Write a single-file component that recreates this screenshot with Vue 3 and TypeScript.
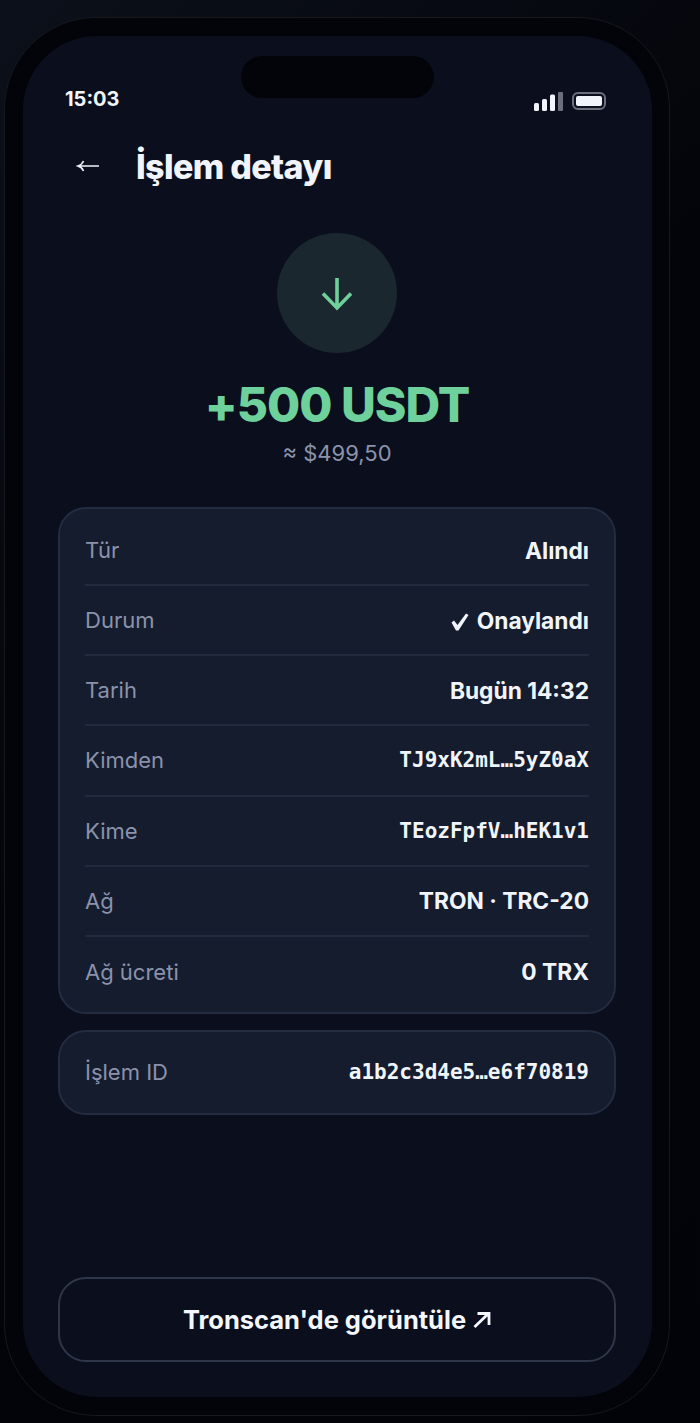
<script setup lang="ts">
interface Row {
  label: string;
  value: string;
  mono?: boolean;
  check?: boolean;
}

const rows: Row[] = [
  { label: 'Tür', value: 'Alındı' },
  { label: 'Durum', value: 'Onaylandı', check: true },
  { label: 'Tarih', value: 'Bugün 14:32' },
  { label: 'Kimden', value: 'TJ9xK2mL…5yZ0aX', mono: true },
  { label: 'Kime', value: 'TEozFpfV…hEK1v1', mono: true },
  { label: 'Ağ', value: 'TRON · TRC-20' },
  { label: 'Ağ ücreti', value: '0 TRX' },
];
</script>

<template>
  <div class="page">
    <div class="phone">
      <div class="screen">
        <div class="island"></div>

        <div class="status">
          <span class="time">15:03</span>
          <div class="status-icons">
            <svg width="30" height="20" viewBox="0 0 30 20" fill="none">
              <rect x="0" y="12" width="5" height="8" rx="1.500" fill="#f1f5fb" />
              <rect x="8" y="8" width="5" height="12" rx="1.500" fill="#f1f5fb" />
              <rect x="16" y="3.500" width="5" height="16.500" rx="1.500" fill="#f1f5fb" />
              <rect x="24" y="1" width="5" height="19" rx="1" fill="#6b6f7c" />
            </svg>
            <div class="battery"><div class="battery-fill"></div></div>
          </div>
        </div>

        <header class="header">
          <svg class="back" width="24" height="14" viewBox="0 0 24 14" fill="none">
            <path
              d="M3 7h20M7.500 2C6.500 4.500 5 6 2 7 5 8 6.500 9.500 7.500 12"
              stroke="#f1f5fb"
              stroke-width="1.600"
            />
          </svg>
          <h1 class="title">İşlem detayı</h1>
        </header>

        <section class="hero">
          <div class="hero-icon">
            <svg width="36" height="36" viewBox="0 0 36 36" fill="none">
              <path
                d="M18 3v30M4 18.500 18 33l14-14.500"
                stroke="#6ed19c"
                stroke-width="3.600"
              />
            </svg>
          </div>
          <div class="amount">+500 USDT</div>
          <div class="fiat">≈ $499,50</div>
        </section>

        <section class="card details">
          <div v-for="row in rows" :key="row.label" class="row">
            <span class="label">{{ row.label }}</span>
            <span class="value" :class="{ mono: row.mono }">
              <svg v-if="row.check" class="check" width="18" height="18" viewBox="0 0 18 18">
                <path d="M0.500 9.500 3 7.500 6.500 12 15 0.500 17.500 2 7.500 17.500H5Z" fill="#f1f5fb" />
              </svg>
              {{ row.value }}
            </span>
          </div>
        </section>

        <section class="card tx">
          <span class="label">İşlem ID</span>
          <span class="value mono">a1b2c3d4e5…e6f70819</span>
        </section>

        <button class="action" type="button">
          Tronscan'de görüntüle
          <svg width="18" height="16" viewBox="0 0 18 16" fill="none">
            <path d="M1.500 15 15 2M4.500 1.500H16V13" stroke="#f4f7fd" stroke-width="2.800" />
          </svg>
        </button>
      </div>
    </div>
  </div>
</template>

<style>
html,
body {
  margin: 0;
  background: #05070d;
}
</style>

<style scoped>
* {
  box-sizing: border-box;
}
.page {
  width: 700px;
  height: 1423px;
  padding: 17px 30px 7px 4px;
  overflow: hidden;
  background: linear-gradient(135deg, #0b101a 0%, #030409 45%, #020308 100%);
  font-family: Inter, 'Liberation Sans', sans-serif;
}
.phone {
  height: 1399px;
  padding: 18px 17px 18px 18px;
  border: 1px solid #16181e;
  border-radius: 92px;
  background: #03040a;
}
.screen {
  position: relative;
  display: flex;
  flex-direction: column;
  height: 100%;
  padding: 0 36px 35px 35px;
  border-radius: 74px;
  background: #0b0f1d;
  color: #f1f5fb;
}
.island {
  position: absolute;
  top: 20px;
  left: 218px;
  width: 193px;
  height: 42px;
  border-radius: 21px;
  background: #03040a;
}
.status {
  display: flex;
  align-items: center;
  justify-content: space-between;
  height: 26px;
  margin: 50px 10px 0 7px;
}
.time {
  font-size: 20px;
  font-weight: 700;
}
.status-icons {
  display: flex;
  align-items: center;
  gap: 8px;
  margin-top: 4px;
}
.battery {
  width: 34px;
  height: 18px;
  padding: 2px;
  border: 2px solid #6b6f7c;
  border-radius: 6px;
}
.battery-fill {
  height: 100%;
  border-radius: 2px;
  background: #f1f5fb;
}
.header {
  display: flex;
  align-items: center;
  gap: 36px;
  height: 44px;
  margin: 32px 0 0 18px;
}
.title {
  margin: 0;
  font-size: 34px;
  font-weight: 800;
  letter-spacing: -0.65px;
}
.hero {
  display: flex;
  flex-direction: column;
  align-items: center;
  margin-top: 45px;
}
.hero-icon {
  display: flex;
  align-items: center;
  justify-content: center;
  width: 120px;
  height: 120px;
  border-radius: 50%;
  background: #1a272f;
}
.amount {
  margin-top: 20px;
  font-size: 48px;
  font-weight: 800;
  line-height: 64px;
  letter-spacing: -1px;
  color: #6ed19c;
}
.fiat {
  font-size: 22px;
  line-height: 32px;
  color: #8b92ab;
}
.card {
  border: 2px solid #232c40;
  background: #141c2e;
}
.details {
  margin-top: 38px;
  padding: 7px 25px 5px;
  border-radius: 28px;
}
.row {
  display: flex;
  align-items: center;
  justify-content: space-between;
  height: 70.150px;
  border-bottom: 2px solid #212a3d;
}
.row:last-child {
  border-bottom: 0;
}
.label {
  font-size: 22px;
  color: #8b92ab;
}
.value {
  font-size: 22.750px;
  font-weight: 700;
}
.check {
  margin-right: 2px;
  vertical-align: -2px;
}
.mono {
  font-family: 'DejaVu Sans Mono', 'Liberation Mono', monospace;
  font-size: 21px;
}
.tx {
  display: flex;
  align-items: center;
  justify-content: space-between;
  height: 85px;
  margin-top: 16px;
  padding: 0 25px;
  border-radius: 28px;
}
.action {
  display: flex;
  align-items: center;
  justify-content: center;
  gap: 7px;
  height: 85px;
  margin-top: auto;
  border: 2px solid #30364a;
  border-radius: 28px;
  background: transparent;
  color: #f4f7fd;
  font-family: inherit;
  font-size: 25.500px;
  font-weight: 700;
}
</style>
